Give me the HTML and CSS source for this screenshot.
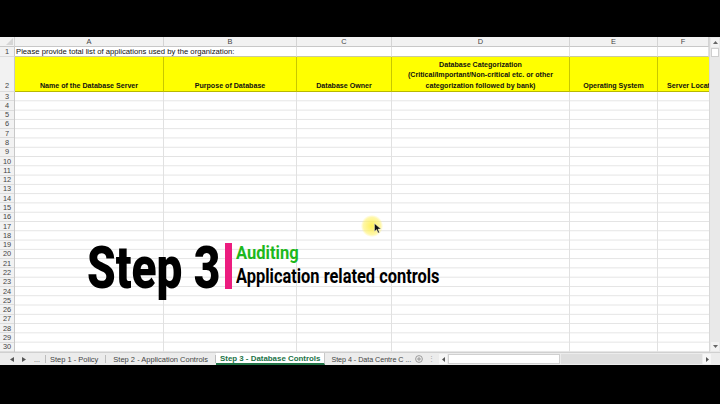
FILE: index.html
```html
<!DOCTYPE html>
<html>
<head>
<meta charset="utf-8">
<link rel="stylesheet" href="styles.css">
</head>
<body>
<div class="screen">
  <div class="letterbox top"></div>
  <div class="excel">
    <div class="sheet">
      <div class="grid">
        <div class="corner"></div>
        <div class="ch">A</div>
        <div class="ch">B</div>
        <div class="ch">C</div>
        <div class="ch">D</div>
        <div class="ch">E</div>
        <div class="ch">F</div>

        <div class="rh">1</div>
        <div class="c1 span2">Please provide total list of applications used by the organization:</div>
        <div class="c1"></div>
        <div class="c1"></div>
        <div class="c1"></div>
        <div class="c1"></div>

        <div class="rh rh2">2</div>
        <div class="hdr">Name of the Database Server</div>
        <div class="hdr">Purpose of Database</div>
        <div class="hdr">Database Owner</div>
        <div class="hdr">Database Categorization<br>(Critical/Important/Non-critical etc. or other<br>categorization followed by bank)</div>
        <div class="hdr">Operating System</div>
        <div class="hdr clip">Server Location</div>

        <div class="rownums">
          <span>3</span><span>4</span><span>5</span><span>6</span><span>7</span><span>8</span><span>9</span>
          <span>10</span><span>11</span><span>12</span><span>13</span><span>14</span><span>15</span><span>16</span>
          <span>17</span><span>18</span><span>19</span><span>20</span><span>21</span><span>22</span><span>23</span>
          <span>24</span><span>25</span><span>26</span><span>27</span><span>28</span><span>29</span><span>30</span>
        </div>
        <div class="col"></div>
        <div class="col"></div>
        <div class="col"></div>
        <div class="col"></div>
        <div class="col"></div>
        <div class="col"></div>
      </div>
      <div class="vscroll">
        <div class="sbtn"><svg width="5" height="3" viewBox="0 0 5 3"><path d="M0 3 L2.5 0 L5 3 Z" fill="#666"/></svg></div>
        <div class="vthumb"></div>
        <div class="vtrack"></div>
        <div class="sbtn"><svg width="5" height="3" viewBox="0 0 5 3"><path d="M0 0 L2.5 3 L5 0 Z" fill="#666"/></svg></div>
      </div>
    </div>
    <div class="tabbar">
      <div class="navs">
        <svg width="4" height="5" viewBox="0 0 4 5"><path d="M4 0 L0 2.5 L4 5 Z" fill="#555"/></svg>
        <svg width="4" height="5" viewBox="0 0 4 5"><path d="M0 0 L4 2.5 L0 5 Z" fill="#555"/></svg>
        <span class="dots">...</span>
      </div>
      <div class="tab first">Step 1 - Policy</div>
      <div class="tab">Step 2 - Application Controls</div>
      <div class="tab active">Step 3 - Database Controls</div>
      <div class="tab last">Step 4 - Data Centre C ...</div>
      <div class="addtab"><svg width="8" height="8" viewBox="0 0 8 8"><circle cx="4" cy="4" r="3.4" fill="none" stroke="#888" stroke-width="0.8"/><path d="M4 2 V6 M2 4 H6" stroke="#888" stroke-width="0.8"/></svg></div>
      <div class="vdots">⋮</div>
      <div class="hscroll">
        <div class="hbtn"><svg width="3" height="5" viewBox="0 0 3 5"><path d="M3 0 L0 2.5 L3 5 Z" fill="#555"/></svg></div>
        <div class="hthumb"></div>
        <div class="htrack"></div>
        <div class="hbtn"><svg width="3" height="5" viewBox="0 0 3 5"><path d="M0 0 L3 2.5 L0 5 Z" fill="#555"/></svg></div>
      </div>
    </div>
  </div>
  <div class="letterbox bottom"></div>

  <div class="overlay">
    <div class="big"><span>Step 3</span></div>
    <div class="bar"></div>
    <div class="caption">
      <div class="aud"><span>Auditing</span></div>
      <div class="app"><span>Application related controls</span></div>
    </div>
  </div>

  <div class="cursor">
    <div class="glow"></div>
    <svg class="arrow" width="8" height="11" viewBox="0 0 8 11"><path d="M0.5 0.5 L0.5 8.5 L2.6 6.6 L4.1 10 L5.4 9.4 L4 6.1 L6.9 6.1 Z" fill="#111" stroke="#fff" stroke-width="0.4"/></svg>
  </div>
</div>
</body>
</html>
```

FILE: styles.css
```css
* { box-sizing: border-box; }
html, body { margin: 0; padding: 0; background: #000; }
body { font-family: "Liberation Sans", Arial, sans-serif; }

.screen {
  position: relative;
  width: 720px;
  height: 404px;
  display: flex;
  flex-direction: column;
  overflow: hidden;
  background: #000;
}
.letterbox.top { height: 37px; flex: none; }
.letterbox.bottom { flex: 1; }

.excel { flex: none; display: flex; flex-direction: column; background: #fff; }

.sheet { display: flex; height: 315px; }

.grid {
  display: grid;
  grid-template-columns: 15px 149px 133px 95px 178px 88px 51px;
  grid-template-rows: 10px 10px 35px 260px;
  width: 709px;
  overflow: hidden;
  background: #fff;
}

.corner {
  background: #f2f2f2;
  border-right: 1px solid #d4d4d4;
  border-bottom: 1px solid #c8c8c8;
  position: relative;
}
.corner::after {
  content: "";
  position: absolute;
  right: 1px; bottom: 1px;
  border-left: 7px solid transparent;
  border-bottom: 7px solid #d6d6d6;
}
.ch {
  background: #f2f2f2;
  border-right: 1px solid #d4d4d4;
  border-bottom: 1px solid #c8c8c8;
  color: #444;
  font-size: 7.4px;
  line-height: 9px;
  text-align: center;
}
.rh {
  background: #f2f2f2;
  border-right: 1px solid #c8c8c8;
  border-bottom: 1px solid #dcdcdc;
  color: #444;
  font-size: 7.4px;
  line-height: 9px;
  text-align: center;
}
.rh2 { display: flex; align-items: flex-end; justify-content: center; padding-bottom: 1px; }

.c1 {
  border-right: 1px solid #e0e0e0;
  border-bottom: 1px solid #c9c9a0;
  font-size: 7.7px;
  line-height: 9px;
  color: #111;
  white-space: nowrap;
  padding-left: 1px;
}
.span2 { grid-column: span 2; }

.hdr {
  background: #ffff00;
  border-right: 1px solid #c8c800;
  border-bottom: 1px solid #b8b800;
  font-size: 7.1px;
  font-weight: 700;
  line-height: 10.5px;
  color: #111;
  text-align: center;
  display: flex;
  align-items: flex-end;
  justify-content: center;
  white-space: nowrap;
}
.hdr.clip { justify-content: flex-start; padding-left: 9px; overflow: hidden; border-right: none; }

.rownums {
  display: flex;
  flex-direction: column;
  background: #f2f2f2;
  border-right: 1px solid #c8c8c8;
  min-height: 0;
  overflow: hidden;
}
.rownums span {
  flex: 1 1 0;
  min-height: 0;
  display: flex;
  align-items: center;
  justify-content: center;
  font-size: 7.4px;
  line-height: 7px;
  color: #444;
  border-bottom: 1px solid #dcdcdc;
}
.col {
  border-right: 1px solid #e1e1e1;
  background-image: linear-gradient(to bottom, transparent calc(100% - 1px), #e3e3e3 0);
  background-size: 100% calc(260px / 28);
  background-repeat: repeat-y;
}
.col:last-child { border-right: none; }

.vscroll {
  width: 11px;
  display: flex;
  flex-direction: column;
  background: #e9e9e9;
  border-left: 1px solid #d8d8d8;
  padding: 1px;
  gap: 1px;
}
.sbtn {
  height: 9px;
  background: #f3f3f3;
  display: flex;
  align-items: center;
  justify-content: center;
}
.vthumb { height: 9px; background: #fff; border: 1px solid #cfcfcf; }
.vtrack { flex: 1; }

.tabbar {
  height: 13px;
  background: #ececec;
  border-top: 1px solid #d0d0d0;
  display: flex;
  align-items: stretch;
  font-size: 7.5px;
  color: #444;
}
.navs {
  width: 46px;
  display: flex;
  align-items: center;
  gap: 8px;
  padding-left: 10px;
  border-right: 1px solid #bdbdbd;
  margin: 2px 0;
}
.dots { font-size: 7px; color: #555; line-height: 1; margin-top: 1px; }
.tab {
  display: flex;
  align-items: center;
  padding: 0 7px;
  white-space: nowrap;
  border-right: 1px solid #bdbdbd;
  margin: 2px 0;
}
.tab.first { padding-left: 4px; }
.tab.active {
  background: #fff;
  color: #217346;
  font-weight: 700;
  font-size: 7.9px;
  margin: 0;
  padding: 0 4px;
  border-bottom: 2px solid #217346;
  border-right: 1px solid #c8c8c8;
}
.tab.last { border-right: none; padding-left: 6px; padding-right: 2px; font-size: 7.2px; letter-spacing: -0.05px; }
.addtab { display: flex; align-items: center; padding: 0 2px 0 2px; }
.vdots { display: flex; align-items: center; color: #aaa; font-size: 7px; padding: 0 2px 0 3px; }
.hscroll {
  flex: 1;
  display: flex;
  align-items: stretch;
  padding: 1px 9px 1px 2px;
  gap: 1px;
}
.hbtn {
  width: 8px;
  background: #f6f6f6;
  display: flex;
  align-items: center;
  justify-content: center;
}
.hthumb { width: 112px; background: #fff; border: 1px solid #d0d0d0; }
.htrack { flex: 1; background: #dedede; }

.overlay {
  position: absolute;
  left: 87px;
  top: 238px;
  display: flex;
  align-items: flex-start;
}
.big {
  width: 135px;
  height: 60px;
  font-family: Roboto, "Liberation Sans", sans-serif;
  font-weight: 900;
  font-size: 60px;
  line-height: 60px;
  color: #000;
  white-space: nowrap;
}
.big span, .aud span, .app span {
  display: inline-block;
  transform-origin: left top;
}
.big span { transform: scaleX(0.765); }
.bar {
  width: 7px;
  height: 46px;
  margin-left: 3px;
  margin-top: 5px;
  background: #ec1c7f;
}
.caption {
  margin-left: 4px;
  margin-top: 5px;
  display: flex;
  flex-direction: column;
  gap: 4px;
  font-family: Roboto, "Liberation Sans", sans-serif;
  font-weight: 700;
  white-space: nowrap;
}
.aud { font-size: 19px; line-height: 19px; color: #1db81d; }
.aud span { transform: scaleX(0.87); }
.app { font-size: 20px; line-height: 20px; color: #000; }
.app span { transform: scaleX(0.82); }

.cursor {
  position: absolute;
  left: 361px;
  top: 215px;
  width: 22px;
  height: 22px;
}
.glow {
  width: 22px;
  height: 22px;
  border-radius: 50%;
  background: radial-gradient(circle, rgba(255,238,60,0.85) 0, rgba(255,242,110,0.6) 55%, rgba(255,250,170,0) 72%);
}
.arrow { position: absolute; left: 13px; top: 8px; }
```
